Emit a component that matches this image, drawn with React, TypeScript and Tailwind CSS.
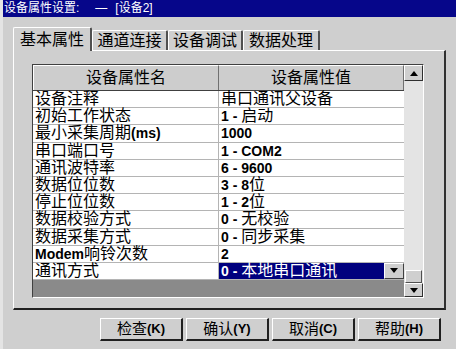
import React from "react";

const B = ({ children }: { children: React.ReactNode }) => (
  <span className="font-bold text-[14px]">{children}</span>
);

const rows: { name: React.ReactNode; value: React.ReactNode }[] = [
  { name: "设备注释", value: "串口通讯父设备" },
  { name: "初始工作状态", value: <><B>1 - </B>启动</> },
  { name: <>最小采集周期<B>(ms)</B></>, value: <B>1000</B> },
  { name: "串口端口号", value: <B>1 - COM2</B> },
  { name: "通讯波特率", value: <B>6 - 9600</B> },
  { name: "数据位位数", value: <><B>3 - 8</B>位</> },
  { name: "停止位位数", value: <><B>1 - 2</B>位</> },
  { name: "数据校验方式", value: <><B>0 - </B>无校验</> },
  { name: "数据采集方式", value: <><B>0 - </B>同步采集</> },
  { name: <><B>Modem</B>响铃次数</>, value: <B>2</B> },
  { name: "通讯方式", value: <><B>0 - </B>本地串口通讯</> },
];

const tabs = [
  { label: "基本属性", w: "w-[79px]" },
  { label: "通道连接", w: "w-[76px]" },
  { label: "设备调试", w: "w-[75px]" },
  { label: "数据处理", w: "w-[77px]" },
];

const buttons = [
  { cn: "检查", key: "(K)" },
  { cn: "确认", key: "(Y)" },
  { cn: "取消", key: "(C)" },
  { cn: "帮助", key: "(H)" },
];

function Arrow({ up }: { up?: boolean }) {
  return (
    <svg width="8" height="5" viewBox="0 0 8 5">
      <polygon points={up ? "0,5 8,5 4,0" : "0,0 8,0 4,5"} fill="#000" />
    </svg>
  );
}

export default function App() {
  return (
    <div className="w-[456px] h-[349px] bg-[#cfcfcf] flex flex-col overflow-hidden text-black font-['Liberation_Sans','Noto_Sans_CJK_SC',sans-serif] border-l-[3px] border-l-[#e4e4e4]">
      {/* title bar */}
      <div className="h-[17px] bg-[#06068a] text-white text-[12px] leading-[17px] pl-[1px] whitespace-nowrap shrink-0 flex">
        <span>设备属性设置:</span>
        <span className="ml-[16px]">—</span>
        <span className="ml-[8px]">[设备2]</span>
      </div>

      <div className="flex flex-col pl-[10px] pt-[10px]">
        {/* tabs */}
        <div className="flex items-end h-[23px] relative z-10">
          {tabs.map((t, i) => (
            <div
              key={t.label}
              className={
                i === 0
                  ? `${t.w} h-[24px] -mb-[1px] bg-[#cfcfcf] border-t border-l border-white border-r-2 border-r-[#505050] text-[16px] flex items-center justify-center rounded-t-[2px]`
                  : `${t.w} h-[20px] border-t border-l border-white border-r-2 border-r-[#505050] text-[16px] flex items-center justify-center rounded-t-[2px]`
              }
            >
              {t.label}
            </div>
          ))}
        </div>

        {/* panel */}
        <div className="w-[433px] h-[260px] border-t border-l border-white border-r-2 border-b-2 border-r-[#303030] border-b-[#202020] pl-[18px] pt-[13px]">
          <div className="w-[392px] h-[234px] border-t border-l border-[#404040] border-r border-b border-r-white border-b-white flex">
            {/* table */}
            <div className="w-[371px] flex flex-col bg-[#8a8a8a]">
              <div className="h-[26px] flex bg-[#cdcdcd] text-[16px] border-b border-[#404040]">
                <div className="w-[186px] flex items-center justify-center border-r border-[#707070] border-t border-l border-t-white border-l-white">
                  设备属性名
                </div>
                <div className="flex-1 flex items-center justify-center border-r border-[#707070] border-t border-t-white">
                  设备属性值
                </div>
              </div>
              {rows.map((r, i) => {
                const sel = i === rows.length - 1;
                return (
                  <div key={i} className="h-[17.2px] flex text-[16px] leading-[16px] bg-white border-b border-[#b4b4b4]">
                    <div className="w-[186px] pl-[2px] flex items-center border-r border-[#b4b4b4] whitespace-nowrap">
                      {r.name}
                    </div>
                    <div
                      className={
                        sel
                          ? "flex-1 pl-[2px] flex items-center bg-[#00007e] text-white whitespace-nowrap"
                          : "flex-1 pl-[2px] flex items-center whitespace-nowrap"
                      }
                    >
                      <span className="flex-1">{r.value}</span>
                      {sel && (
                        <div className="w-[20px] h-full bg-[#cfcfcf] border-t border-l border-white border-r border-b border-r-[#404040] border-b-[#404040] flex items-center justify-center">
                          <Arrow />
                        </div>
                      )}
                    </div>
                  </div>
                );
              })}
            </div>

            {/* scrollbar */}
            <div className="w-[19px] flex flex-col bg-[#e4e4e4]">
              <div className="h-[16px] bg-[#cfcfcf] border-t border-l border-white border-r border-b border-r-[#303030] border-b-[#303030] flex items-center justify-center">
                <Arrow up />
              </div>
              <div className="flex-1" />
              <div className="h-[13px] mx-[1px] bg-[#cfcfcf] border-t border-l border-white border-r border-b border-r-[#505050] border-b-[#505050]" />
              <div className="h-[14px] bg-[#cfcfcf] border-t border-l border-white border-r border-b border-r-[#303030] border-b-[#303030] flex items-center justify-center">
                <Arrow />
              </div>
            </div>
          </div>
        </div>

        {/* buttons */}
        <div className="flex gap-[3px] pl-[87px] pt-[8px]">
          {buttons.map((b) => (
            <div
              key={b.cn}
              className="w-[83px] h-[23px] border-t border-l border-white border-r-2 border-b-2 border-r-[#202020] border-b-[#202020] flex items-center justify-center text-[15px]"
            >
              {b.cn}
              <span className="font-bold text-[13px]">{b.key}</span>
            </div>
          ))}
        </div>
      </div>
    </div>
  );
}
